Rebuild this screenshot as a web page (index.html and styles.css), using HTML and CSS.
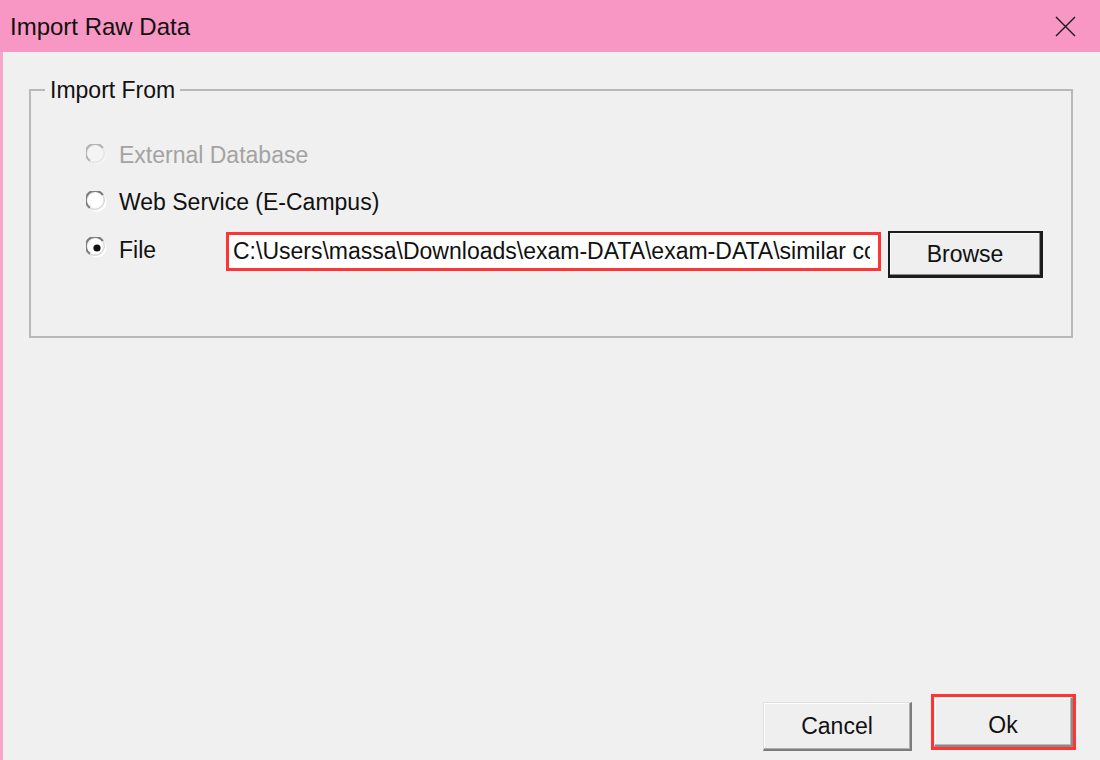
FILE: index.html
```html
<!DOCTYPE html>
<html lang="en">
<head>
<meta charset="utf-8">
<title>Import Raw Data</title>
<link rel="stylesheet" href="styles.css">
</head>
<body>
<div class="window">
  <header class="titlebar">
    <span class="title">Import Raw Data</span>
    <button class="close" aria-label="Close">
      <svg width="21" height="21" viewBox="0 0 21 21"><path d="M1 1 L20 20 M20 1 L1 20" stroke="#1a1a1a" stroke-width="1.4" fill="none"/></svg>
    </button>
  </header>
  <main class="client">
    <fieldset class="group">
      <legend class="group-title">Import From</legend>
      <div class="options">
        <div class="option disabled">
          <span class="radio"><svg width="22" height="22" viewBox="0 0 22 22"><circle cx="11" cy="11" r="9.5" fill="#f4f4f4"/><path d="M16.8 4.1 A9.2 9.2 0 1 0 4.1 16.8" stroke="#b4b4b4" stroke-width="2.2" fill="none"/><path d="M4.1 16.8 A9.2 9.2 0 0 0 16.8 4.1" stroke="#e4e4e4" stroke-width="1.5" fill="none"/></svg></span>
          <span class="label">External Database</span>
        </div>
        <div class="option">
          <span class="radio"><svg width="22" height="22" viewBox="0 0 22 22"><circle cx="11" cy="11" r="9.5" fill="#fff"/><path d="M16.8 4.1 A9.2 9.2 0 1 0 4.1 16.8" stroke="#7e7e7e" stroke-width="2.2" fill="none"/><path d="M4.1 16.8 A9.2 9.2 0 0 0 16.8 4.1" stroke="#d8d8d8" stroke-width="1.5" fill="none"/></svg></span>
          <span class="label">Web Service (E-Campus)</span>
        </div>
        <div class="option file-row">
          <span class="radio"><svg width="22" height="22" viewBox="0 0 22 22"><circle cx="11" cy="11" r="9.5" fill="#fff"/><path d="M16.8 4.1 A9.2 9.2 0 1 0 4.1 16.8" stroke="#7e7e7e" stroke-width="2.2" fill="none"/><path d="M4.1 16.8 A9.2 9.2 0 0 0 16.8 4.1" stroke="#d8d8d8" stroke-width="1.5" fill="none"/><circle cx="11" cy="11" r="3.6" fill="#111"/></svg></span>
          <span class="label file-label">File</span>
          <div class="path-box"><span class="path">C:\Users\massa\Downloads\exam-DATA\exam-DATA\similar co</span></div>
          <button class="btn default browse">Browse</button>
        </div>
      </div>
    </fieldset>
    <div class="actions">
      <button class="btn cancel">Cancel</button>
      <div class="highlight"><button class="btn ok">Ok</button></div>
    </div>
  </main>
</div>
</body>
</html>
```
FILE: styles.css
```css
* { box-sizing: border-box; }

html, body {
  margin: 0;
  padding: 0;
}

body {
  width: 1100px;
  height: 760px;
  background: #f0f0f0;
  font-family: "Liberation Sans", Arial, sans-serif;
  color: #111;
  overflow: hidden;
}

.window {
  display: flex;
  flex-direction: column;
  height: 760px;
}

.titlebar {
  height: 52px;
  flex: 0 0 52px;
  background: #f897c3;
  display: flex;
  align-items: center;
  justify-content: space-between;
  padding-left: 10px;
}

.title {
  font-size: 24px;
  color: #111;
  margin-top: 1px;
}

.close {
  background: none;
  border: 0;
  padding: 0;
  margin-right: 24px;
  width: 21px;
  height: 21px;
  display: block;
}
.close svg { display: block; }

.client {
  flex: 1;
  display: flex;
  flex-direction: column;
  border-left: 3px solid #f7a6cb;
  padding: 0 24px 9px 26px;
}

.group {
  margin: 25px 3px 0 0;
  border: 2px solid #b9b9b9;
  padding: 28px 0 58px 0;
  min-width: 0;
}

.group-title {
  font-size: 23px;
  line-height: 26px;
  padding: 0 5px;
  margin-left: 14px;
  color: #111;
}

.options {
  padding-left: 55px;
  display: flex;
  flex-direction: column;
}

.option {
  display: flex;
  align-items: center;
  height: 47px;
  font-size: 23px;
  line-height: 26px;
}

.radio {
  width: 22px;
  height: 22px;
  flex: 0 0 22px;
}
.radio svg { display: block; }

.label {
  margin-left: 11px;
  white-space: nowrap;
}

.disabled .label { color: #a3a3a3; }

.file-row {
  height: auto;
  align-items: flex-start;
}
.file-row .radio { margin-top: 12px; }
.file-row .file-label {
  margin-top: 12px;
  width: 107px;
  flex: 0 0 107px;
}

.path-box {
  margin-top: 7px;
  width: 655px;
  flex: 0 0 655px;
  height: 39px;
  border: 3px solid #ff3434;
  background: #fff;
  padding: 0 8px 0 4px;
  overflow: hidden;
  white-space: nowrap;
  line-height: 33px;
  color: #111;
}

.path {
  display: block;
  overflow: hidden;
  white-space: nowrap;
}

.btn {
  font-family: "Liberation Sans", Arial, sans-serif;
  font-size: 23px;
  color: #111;
  background: #efefef;
  padding: 0;
  text-align: center;
}

.browse {
  margin-top: 6px;
  margin-left: 7px;
  width: 155px;
  height: 47px;
  flex: 0 0 155px;
  border: 2px solid #1c1c1c;
  border-right-width: 3px;
  border-bottom-width: 3px;
  box-shadow: inset -1px -1px 0 #8c8c8c, inset 1px 1px 0 #fcfcfc;
}

.actions {
  margin-top: auto;
  display: flex;
  justify-content: flex-end;
  align-items: flex-end;
}

.cancel {
  width: 149px;
  height: 49px;
  margin-right: 19px;
  border-top: 1px solid #e0e0e0;
  border-left: 1px solid #e0e0e0;
  border-right: 2px solid #7c7c7c;
  border-bottom: 2px solid #7c7c7c;
  box-shadow: inset -1px -1px 0 #b0b0b0, inset 1px 1px 0 #ffffff;
}

.highlight {
  border: 3px solid #ff3434;
  width: 145px;
  height: 56px;
  margin-bottom: 1px;
  display: flex;
}

.ok {
  width: 100%;
  height: 100%;
  padding-top: 8px;
  border-top: 1px solid #e8e8e8;
  border-left: 1px solid #e8e8e8;
  border-right: 2px solid #8a8a8a;
  border-bottom: 2px solid #8a8a8a;
  box-shadow: inset -1px -1px 0 #b8b8b8, inset 1px 1px 0 #ffffff;
}
```
